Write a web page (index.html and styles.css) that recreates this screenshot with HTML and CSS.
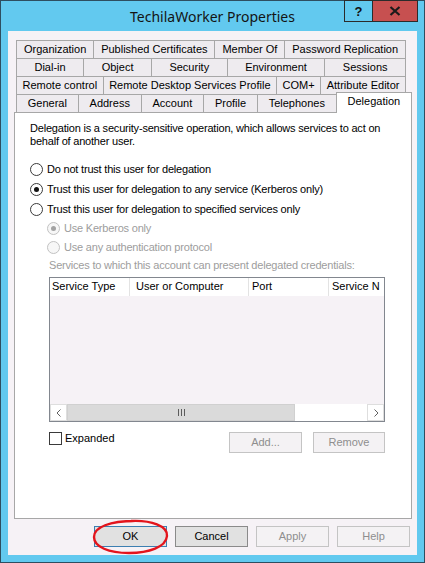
FILE: index.html
```html
<!DOCTYPE html>
<html>
<head>
<meta charset="utf-8">
<title>TechilaWorker Properties</title>
<link rel="stylesheet" href="styles.css">
</head>
<body>
<div class="window">
  <div class="titlebar">
    <div class="title">TechilaWorker Properties</div>
    <div class="caption-btns">
      <div class="cbtn help">?</div>
      <div class="cbtn close">
        <svg width="12" height="10" viewBox="0 0 12 10"><path d="M1.5 1 L10.5 9 M10.5 1 L1.5 9" stroke="#1a1a1a" stroke-width="2.2" fill="none"/></svg>
      </div>
    </div>
  </div>
  <div class="client">
    <div class="tabctl">
      <div class="tabrow">
        <div class="tab">Organization</div>
        <div class="tab">Published Certificates</div>
        <div class="tab">Member Of</div>
        <div class="tab">Password Replication</div>
      </div>
      <div class="tabrow">
        <div class="tab">Dial-in</div>
        <div class="tab">Object</div>
        <div class="tab">Security</div>
        <div class="tab">Environment</div>
        <div class="tab">Sessions</div>
      </div>
      <div class="tabrow">
        <div class="tab">Remote control</div>
        <div class="tab">Remote Desktop Services Profile</div>
        <div class="tab">COM+</div>
        <div class="tab">Attribute Editor</div>
      </div>
      <div class="tabrow">
        <div class="tab">General</div>
        <div class="tab">Address</div>
        <div class="tab">Account</div>
        <div class="tab">Profile</div>
        <div class="tab">Telephones</div>
        <div class="tab selected">Delegation</div>
      </div>
      <div class="panel">
        <p class="intro">Delegation is a security-sensitive operation, which allows services to act on behalf of another user.</p>
        <div class="radios">
          <div class="radio-row"><span class="radio"></span><span>Do not trust this user for delegation</span></div>
          <div class="radio-row"><span class="radio checked"></span><span>Trust this user for delegation to any service (Kerberos only)</span></div>
          <div class="radio-row"><span class="radio"></span><span>Trust this user for delegation to specified services only</span></div>
          <div class="radio-row sub disabled"><span class="radio checked"></span><span>Use Kerberos only</span></div>
          <div class="radio-row sub disabled"><span class="radio"></span><span>Use any authentication protocol</span></div>
        </div>
        <div class="services-label">Services to which this account can present delegated credentials:</div>
        <div class="listview">
          <div class="lv-header">
            <div class="col c1">Service Type</div>
            <div class="col c2">User or Computer</div>
            <div class="col c3">Port</div>
            <div class="col c4">Service N</div>
          </div>
          <div class="lv-body"></div>
          <div class="hscroll">
            <div class="sb-btn"><svg width="6" height="8" viewBox="0 0 6 8"><path d="M4.5 0.5 L1 4 L4.5 7.5" stroke="#606060" stroke-width="1" fill="none"/></svg></div>
            <div class="sb-thumb"><span class="grip"></span><span class="grip"></span><span class="grip"></span></div>
            <div class="sb-track"></div>
            <div class="sb-btn"><svg width="6" height="8" viewBox="0 0 6 8"><path d="M1.5 0.5 L5 4 L1.5 7.5" stroke="#606060" stroke-width="1" fill="none"/></svg></div>
          </div>
        </div>
        <div class="bottom-row">
          <div class="check-row"><span class="checkbox"></span><span>Expanded</span></div>
          <div class="small-btns">
            <div class="btn disabled add">Add...</div>
            <div class="btn disabled remove">Remove</div>
          </div>
        </div>
      </div>
    </div>
    <div class="dlg-buttons">
      <div class="btn focused">OK</div>
      <div class="btn">Cancel</div>
      <div class="btn disabled">Apply</div>
      <div class="btn disabled">Help</div>
    </div>
    <svg class="annotation" width="80" height="38" viewBox="0 0 80 38">
      <path d="M40 3 C60 2 77 8 76 18 C75 29 58 35 38 35 C18 35 3 29 3 19 C3 9 19 3 44 3" stroke="#e3141c" stroke-width="2.4" fill="none"/>
    </svg>
  </div>
</div>
</body>
</html>
```

FILE: styles.css
```css
* { box-sizing: border-box; }
html, body { margin: 0; padding: 0; }
body {
  font-family: "Liberation Sans", Arial, sans-serif;
  font-size: 11px;
  color: #000;
  background: #ffffff;
}
.window {
  width: 425px;
  height: 563px;
  border: 1px solid #2e4e60;
  background: #62c9ef;
  padding: 0 7px 7px;
  position: relative;
  display: flex;
  flex-direction: column;
}
.titlebar {
  height: 30px;
  flex: none;
  display: flex;
  align-items: center;
  justify-content: center;
}
.title {
  font-family: "Noto Sans", sans-serif;
  font-size: 14px;
  color: #141414;
  margin-top: 1px;
}
.caption-btns {
  position: absolute;
  top: -1px;
  right: 6px;
  display: flex;
}
.cbtn {
  height: 22px;
  border: 1px solid #2b2b2b;
  display: flex;
  align-items: center;
  justify-content: center;
}
.help {
  width: 28px;
  border-right: none;
  font-family: "Liberation Sans", Arial, sans-serif;
  font-weight: bold;
  font-size: 13px;
  color: #111;
}
.close {
  width: 46px;
  background: #c75050;
}
.client {
  flex: 1;
  background: #f6f2f6;
  display: flex;
  flex-direction: column;
  position: relative;
}
.tabctl {
  margin: 9px 0 0 6px;
  width: 398px;
  display: flex;
  flex-direction: column;
}
.tabrow {
  display: flex;
  margin-left: 2px;
  width: 390px;
  height: 18px;
}
.tab {
  flex: 1 1 auto;
  border: 1px solid #a7a7a7;
  border-bottom: none;
  background: #eeebef;
  text-align: center;
  line-height: 17px;
  white-space: nowrap;
  padding: 0 2px;
}
.tab + .tab { margin-left: -1px; }
.tab.selected {
  background: #ffffff;
  margin-top: -2px;
  margin-bottom: -1px;
  margin-right: -6px;
  line-height: 16px;
  position: relative;
  z-index: 1;
}
.panel {
  height: 407px;
  border: 1px solid #a7a7a7;
  background: #ffffff;
  padding: 9px 0 0 15px;
  letter-spacing: -0.2px;
}
.intro {
  margin: 0;
  line-height: 13px;
  width: 375px;
}
.radios {
  margin-top: 12px;
  display: flex;
  flex-direction: column;
}
.radio-row {
  height: 19px;
  display: flex;
  align-items: center;
  gap: 4px;
  line-height: 13px;
}
.radio-row:nth-child(2) { margin-top: 1px; }
.radio-row:nth-child(3) { margin-top: 1px; }
.radio-row.sub { padding-left: 17px; gap: 4px; }
.radio-row.disabled { color: #9d9d9d; }
.radio {
  width: 13px;
  height: 13px;
  border: 1px solid #3a3a3a;
  border-radius: 50%;
  background: #fff;
  display: flex;
  align-items: center;
  justify-content: center;
  flex: none;
}
.radio.checked::after {
  content: "";
  width: 5px;
  height: 5px;
  border-radius: 50%;
  background: #111;
}
.disabled .radio {
  border-color: #c2c2c2;
  background: #f7f7f7;
}
.disabled .radio.checked::after { background: #a3a3a3; }
.services-label {
  margin: 2px 0 0 19px;
  line-height: 13px;
  color: #9d9d9d;
}
.listview {
  margin: 5px 0 0 19px;
  width: 336px;
  height: 145px;
  border: 1px solid #82878f;
  display: flex;
  flex-direction: column;
  background: #f6f2f6;
  letter-spacing: 0;
}
.lv-header {
  height: 18px;
  background: #ffffff;
  display: flex;
  flex: none;
  line-height: 17px;
}
.col {
  border-right: 1px solid #e3e3e3;
  white-space: nowrap;
  overflow: hidden;
  flex: none;
}
.c1 { width: 80px; padding-left: 2px; }
.c2 { width: 119px; padding-left: 6px; }
.c3 { width: 80px; padding-left: 3px; }
.c4 { flex: 1; padding-left: 3px; border-right: none; }
.lv-body { flex: 1; }
.hscroll {
  height: 17px;
  flex: none;
  display: flex;
  background: #ffffff;
}
.sb-btn {
  width: 17px;
  height: 17px;
  border: 1px solid #dedede;
  background: #ffffff;
  display: flex;
  align-items: center;
  justify-content: center;
  flex: none;
}
.sb-thumb {
  width: 228px;
  background: #dadada;
  border: 1px solid #d0d0d0;
  display: flex;
  align-items: center;
  justify-content: center;
  gap: 2px;
  flex: none;
}
.grip {
  width: 1px;
  height: 7px;
  background: #5c5c5c;
}
.sb-track { flex: 1; }
.bottom-row {
  margin: 10px 0 0 19px;
  width: 336px;
  display: flex;
  justify-content: space-between;
  align-items: flex-start;
  letter-spacing: 0;
}
.check-row {
  display: flex;
  gap: 3px;
  line-height: 13px;
}
.checkbox {
  width: 13px;
  height: 13px;
  border: 1px solid #3a3a3a;
  background: #fff;
  flex: none;
}
.small-btns {
  display: flex;
  gap: 11px;
}
.btn {
  width: 73px;
  height: 21px;
  border: 1px solid #8a8a8a;
  background: #e1e1e1;
  display: flex;
  align-items: center;
  justify-content: center;
  line-height: 13px;
}
.btn.focused { border-color: #3c7fb1; }
.btn.disabled {
  border-color: #c4c4c4;
  background: #f4f2f4;
  color: #8e8e8e;
}
.btn.remove { width: 72px; }
.dlg-buttons {
  margin: 7px 7px 0 0;
  display: flex;
  justify-content: flex-end;
  gap: 8px;
}
.annotation {
  position: absolute;
  left: 83px;
  top: 487px;
}
```
